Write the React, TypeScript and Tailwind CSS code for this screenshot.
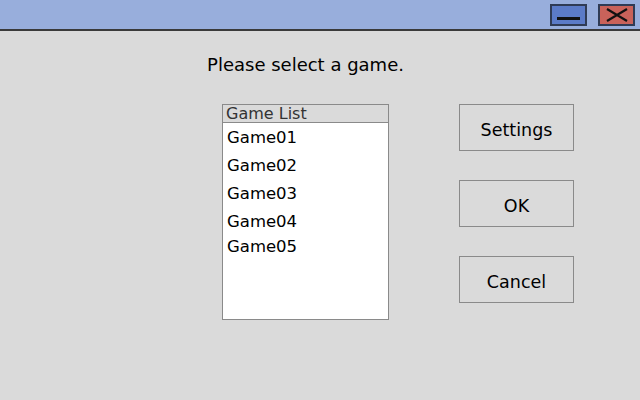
export default function App() {
  const games = [
    { name: "Game01", h: "h-[28px]" },
    { name: "Game02", h: "h-[28px]" },
    { name: "Game03", h: "h-[28px]" },
    { name: "Game04", h: "h-[25px]" },
    { name: "Game05", h: "h-[28px]" },
  ];

  return (
    <div className="w-[640px] h-[400px] bg-[#dadada] flex flex-col text-black font-['DejaVu_Sans',sans-serif]">
      {/* title bar */}
      <div className="h-[31px] bg-[#98aedc] border-b-2 border-[#3a3a3a] flex items-start justify-end pt-[4px] pr-[5px] gap-[11px]">
        <button className="w-[37px] h-[22px] bg-[#5b7bc8] border-2 border-[#2f3b55] flex items-center justify-center">
          <span className="block w-[23px] h-[3px] bg-[#111] mt-[6px]" />
        </button>
        <button className="w-[37px] h-[22px] bg-[#c9625a] border-2 border-[#2f3b55] flex items-center justify-center">
          <svg width="24" height="14" viewBox="0 0 24 14">
            <path d="M2 1 L22 13 M22 1 L2 13" stroke="#111" strokeWidth="2.2" />
          </svg>
        </button>
      </div>

      {/* body */}
      <div className="flex pl-[222px] pt-[21px]">
        <div className="w-[167px] flex flex-col">
          <div className="h-[52px] flex justify-center whitespace-nowrap text-[18px] leading-[26px]">
            Please select a game.
          </div>
          <div className="h-[216px] bg-white border border-[#8a8a8a] flex flex-col">
            <div className="h-[18px] bg-[#dadada] border-b border-[#8a8a8a] text-[16px] leading-[17px] text-[#333] pl-[3px]">
              Game List
            </div>
            <div className="flex flex-col pl-[4px] pt-[1px] text-[16.5px]">
              {games.map((g) => (
                <div key={g.name} className={`${g.h} leading-[28px]`}>
                  {g.name}
                </div>
              ))}
            </div>
          </div>
        </div>

        <div className="ml-[70px] pt-[52px] flex flex-col gap-[29px]">
          {["Settings", "OK", "Cancel"].map((label) => (
            <button
              key={label}
              className="w-[115px] h-[47px] pt-[5px] border border-[#8a8a8a] bg-[#dadada] text-[17.5px] flex items-center justify-center"
            >
              {label}
            </button>
          ))}
        </div>
      </div>
    </div>
  );
}
